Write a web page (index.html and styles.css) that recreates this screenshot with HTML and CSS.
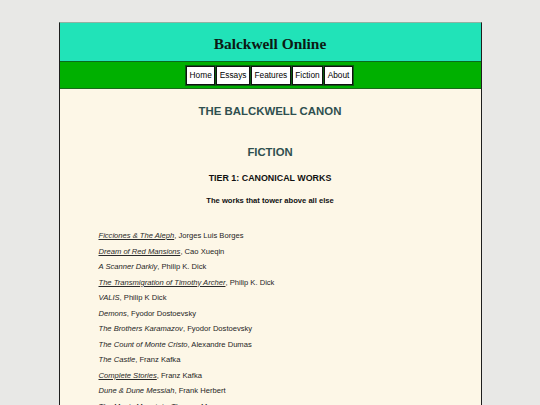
FILE: index.html
```html
<!DOCTYPE html>
<html>
<head>
<meta charset="utf-8">
<link rel="stylesheet" href="styles.css">
</head>
<body>
<div class="page">
  <header class="masthead"><h1 class="site-title">Balckwell Online</h1></header>
  <nav class="nav">
    <a class="nav-btn" href="#">Home</a><a class="nav-btn" href="#">Essays</a><a class="nav-btn" href="#">Features</a><a class="nav-btn" href="#">Fiction</a><a class="nav-btn" href="#">About</a>
  </nav>
  <main class="content">
    <h2 class="canon-title">THE BALCKWELL CANON</h2>
    <h3 class="section-title">FICTION</h3>
    <h4 class="tier-title">TIER 1: CANONICAL WORKS</h4>
    <p class="tier-sub">The works that tower above all else</p>
    <ul class="works">
      <li><a href="#">Ficciones &amp; The Aleph</a>, Jorges Luis Borges</li>
      <li><a href="#">Dream of Red Mansions</a>, Cao Xueqin</li>
      <li><i>A Scanner Darkly</i>, Philip K. Dick</li>
      <li><a href="#">The Transmigration of Timothy Archer</a>, Philip K. Dick</li>
      <li><i>VALIS</i>, Philip K Dick</li>
      <li><i>Demons</i>, Fyodor Dostoevsky</li>
      <li><i>The Brothers Karamazov</i>, Fyodor Dostoevsky</li>
      <li><i>The Count of Monte Cristo</i>, Alexandre Dumas</li>
      <li><i>The Castle</i>, Franz Kafka</li>
      <li><a href="#">Complete Stories</a>, Franz Kafka</li>
      <li><i>Dune &amp; Dune Messiah</i>, Frank Herbert</li>
      <li><i>The Magic Mountain</i>, Thomas Mann</li>
    </ul>
  </main>
</div>
</body>
</html>
```

FILE: styles.css
```css
html, body {
  margin: 0;
  padding: 0;
  background: #e8e8e6;
  height: 405px;
  overflow: hidden;
}
body {
  padding-top: 22px;
  font-family: "Liberation Sans", Arial, sans-serif;
}
.page {
  width: 421px;
  margin: 0 auto;
  border: 1px solid #1e1e1e;
  border-top-color: #8fb3a2;
  background: #fdf7e7;
  min-height: 400px;
}
.masthead {
  background: #21e3b8;
  height: 38px;
  display: flex;
  align-items: center;
  justify-content: center;
  border-bottom: 1px solid #0b6a1c;
}
.site-title {
  margin: 3px 0 0 0;
  font-family: "Liberation Serif", "Times New Roman", serif;
  font-weight: bold;
  font-size: 15.4px;
  color: #0c1a14;
}
.nav {
  background: #00b000;
  height: 26px;
  display: flex;
  align-items: center;
  justify-content: center;
  border-bottom: 1px solid #1a6a1a;
}
.nav-btn {
  display: block;
  background: #fff;
  border: 1px solid #111;
  color: #000;
  text-decoration: none;
  font-size: 8.3px;
  line-height: 17px;
  padding: 0 2.5px;
  margin-right: 1px;
  outline: 1px solid #0b5a10;
}
.content {
  padding: 0 30px 0 39px;
}
.canon-title {
  margin: 15px 0 0 -9px;
  text-align: center;
  font-size: 11.4px;
  color: #2f4f4f;
  line-height: 15px;
}
.section-title {
  margin: 26px 0 0 -9px;
  text-align: center;
  font-size: 11.3px;
  color: #2f4f4f;
  line-height: 15px;
}
.tier-title {
  margin: 12px 0 0 -9px;
  text-align: center;
  font-size: 8.9px;
  color: #111;
  line-height: 12px;
}
.tier-sub {
  margin: 12px 0 0 -9px;
  text-align: center;
  font-size: 7.6px;
  font-weight: bold;
  color: #111;
  line-height: 10px;
}
.works {
  list-style: none;
  margin: 22px 0 0 0;
  padding: 0;
}
.works li {
  font-size: 7.6px;
  line-height: 15.5px;
  color: #1e1e1e;
}
.works a {
  color: #2a2a2a;
  font-style: italic;
  text-decoration: underline;
}
.works i {
  color: #1e1e1e;
}
```
